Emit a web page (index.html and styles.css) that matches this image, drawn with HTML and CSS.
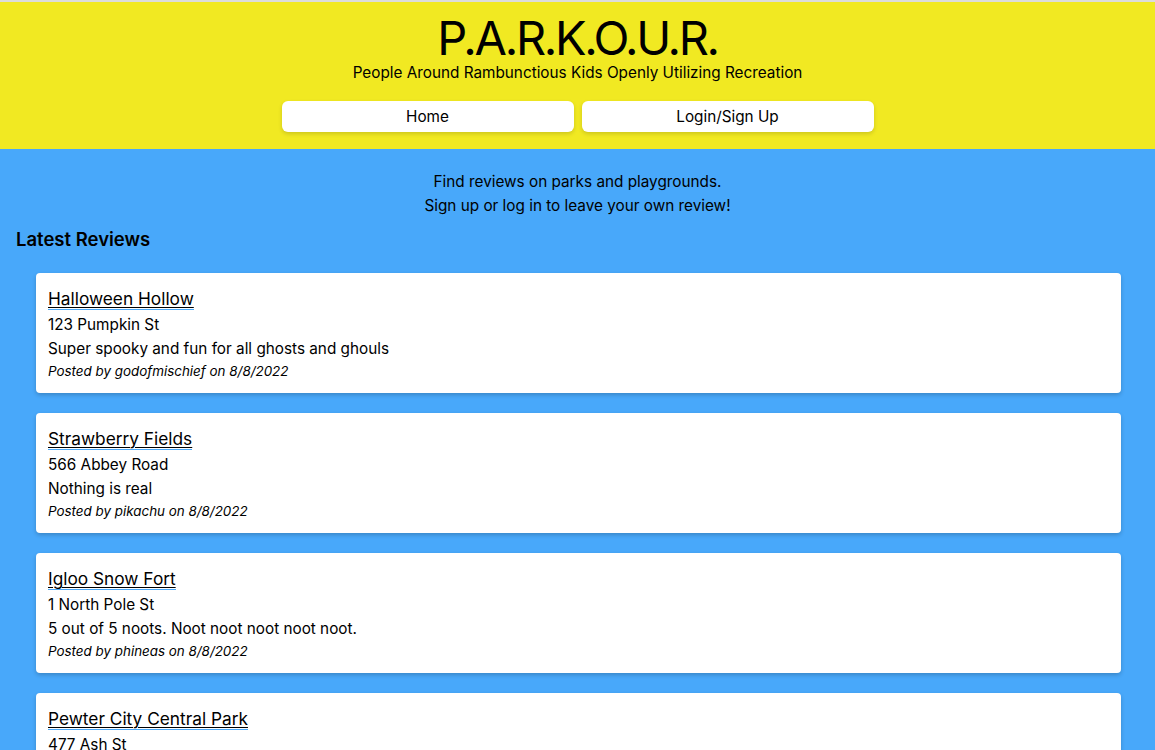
FILE: index.html
```html
<!DOCTYPE html>
<html>
<head>
<meta charset="utf-8">
<title>P.A.R.K.O.U.R.</title>
<link rel="stylesheet" href="styles.css">
</head>
<body>
<header class="site-header">
  <h1 class="logo">P.A.R.K.O.U.R.</h1>
  <p class="tagline">People Around Rambunctious Kids Openly Utilizing Recreation</p>
  <nav class="nav">
    <a class="nav-btn" href="#">Home</a>
    <a class="nav-btn" href="#">Login/Sign Up</a>
  </nav>
</header>
<main class="main">
  <div class="intro">
    <p>Find reviews on parks and playgrounds.</p>
    <p>Sign up or log in to leave your own review!</p>
  </div>
  <h2 class="section-title">Latest Reviews</h2>
  <div class="reviews">
    <article class="card">
      <div class="park-line"><a class="park" href="#">Halloween Hollow</a></div>
      <p class="addr">123 Pumpkin St</p>
      <p class="desc">Super spooky and fun for all ghosts and ghouls</p>
      <p class="meta">Posted by godofmischief on 8/8/2022</p>
    </article>
    <article class="card">
      <div class="park-line"><a class="park" href="#">Strawberry Fields</a></div>
      <p class="addr">566 Abbey Road</p>
      <p class="desc">Nothing is real</p>
      <p class="meta">Posted by pikachu on 8/8/2022</p>
    </article>
    <article class="card">
      <div class="park-line"><a class="park" href="#">Igloo Snow Fort</a></div>
      <p class="addr">1 North Pole St</p>
      <p class="desc">5 out of 5 noots. Noot noot noot noot noot.</p>
      <p class="meta">Posted by phineas on 8/8/2022</p>
    </article>
    <article class="card">
      <div class="park-line"><a class="park" href="#">Pewter City Central Park</a></div>
      <p class="addr">477 Ash St</p>
      <p class="desc">Rock solid place to train</p>
      <p class="meta">Posted by pikachu on 8/8/2022</p>
    </article>
  </div>
</main>
</body>
</html>
```

FILE: styles.css
```css
* { box-sizing: border-box; }
html, body { margin: 0; padding: 0; }
body {
  font-family: Inter, "Helvetica Neue", Arial, sans-serif;
  background: #48a8fa;
  color: #000;
  font-size: 15.3px;
  line-height: 24px;
}
.site-header {
  background: #f1e922;
  border-top: 2px solid #dcdcdc;
  padding: 10px 0 17px;
  text-align: center;
}
.logo {
  margin: 0;
  font-size: 47px;
  line-height: 52px;
  font-weight: 400;
  letter-spacing: -2.3px;
}
.tagline {
  margin: 0;
  font-size: 15.3px;
  line-height: 18px;
}
.nav {
  display: flex;
  justify-content: center;
  gap: 8px;
  margin-top: 19px;
}
.nav-btn {
  width: 292px;
  height: 31px;
  line-height: 31px;
  background: #fff;
  border-radius: 6px;
  color: #000;
  text-decoration: none;
  font-size: 15.3px;
  box-shadow: 0 2px 4px rgba(0,0,0,0.15);
}
.main {
  padding: 21px 34px 20px 16px;
}
.intro {
  text-align: center;
  padding-left: 18px;
}
.intro p { margin: 0; }
.section-title {
  margin: 9px 0 22px;
  font-size: 18.5px;
  line-height: 24px;
  font-weight: 600;
}
.reviews {
  display: flex;
  flex-direction: column;
  gap: 20px;
  padding-left: 20px;
}
.card {
  background: #fff;
  border-radius: 4px;
  padding: 12px;
  box-shadow: 0 2px 4px rgba(0,0,0,0.2);
}
.park-line {
  font-size: 17.3px;
  line-height: 28px;
}
.park {
  color: #000;
  text-decoration: underline;
  text-decoration-thickness: 1px;
  text-underline-offset: 2px;
  border-bottom: 1px solid #48a8fa;
}
.card p { margin: 0; }
.addr, .desc {
  line-height: 24px;
}
.meta {
  font-size: 13.4px;
  line-height: 20px;
  font-style: italic;
}
```
